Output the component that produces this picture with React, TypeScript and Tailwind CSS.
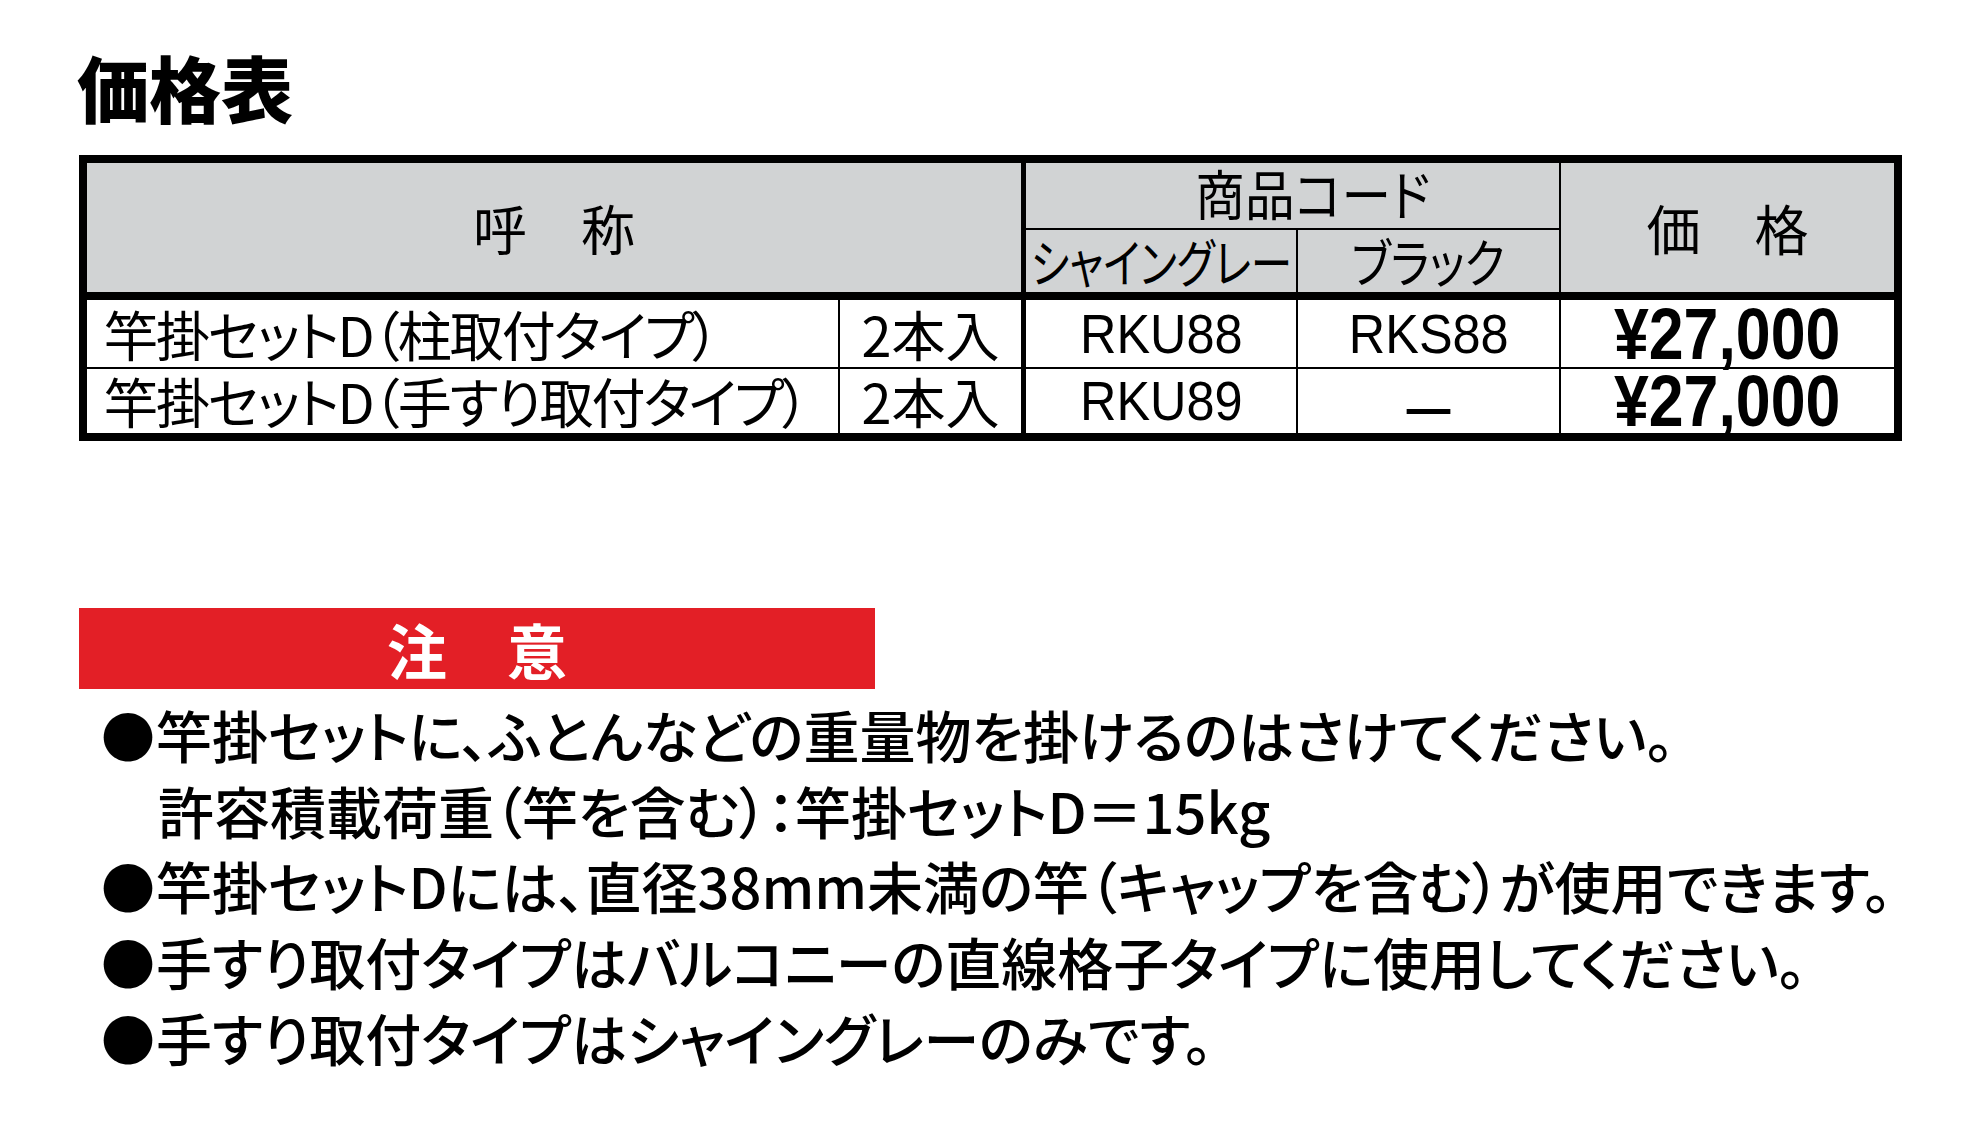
export default function App() {
  return (
    <div className="w-[1972px] h-[1144px] overflow-hidden bg-white text-black font-['Noto_Sans_CJK_JP','Noto_Sans_CJK_SC',sans-serif] [font-feature-settings:'palt'] pl-[79px] pt-[50px]">
      <h1 className="text-[72px] leading-[72px] font-black -ml-[2px]">価格表</h1>

      <div className="mt-[33px] w-[1823px] border-[8px] border-black">
        {/* header */}
        <div className="flex h-[137px] border-b-[8px] border-black bg-[#d1d3d4]">
          <div className="w-[939px] border-r-[5px] border-black flex items-center justify-center text-[54px] leading-none">
            呼　称
          </div>
          <div className="w-[535px] border-r-2 border-black flex flex-col">
            <div className="h-[67px] border-b-2 border-black flex items-center justify-center pl-[40px] pb-[5px] text-[54px] leading-none">
              <span className="inline-block whitespace-nowrap scale-x-[0.92]">商品コード</span>
            </div>
            <div className="flex-1 flex">
              <div className="w-[272px] border-r-2 border-black flex items-center justify-center text-[52px] leading-none">
                <span className="inline-block whitespace-nowrap scale-x-[0.8]">シャイングレー</span>
              </div>
              <div className="flex-1 flex items-center justify-center text-[52px] leading-none">
                <span className="inline-block whitespace-nowrap scale-x-[0.86]">ブラック</span>
              </div>
            </div>
          </div>
          <div className="flex-1 flex items-center justify-center text-[54px] leading-none">
            価　格
          </div>
        </div>

        {/* row 1 */}
        <div className="flex h-[69px] border-b-2 border-black">
          <div className="w-[753px] border-r-2 border-black flex items-center pl-[17px] text-[54px] leading-none tracking-[-2px] whitespace-nowrap">
            竿掛セットD（柱取付タイプ）
          </div>
          <div className="w-[186px] border-r-[5px] border-black flex items-center justify-center text-[54px] leading-none">
            2本入
          </div>
          <div className="w-[272px] border-r-2 border-black flex items-center justify-center">
            <span className="inline-block font-['Liberation_Sans',sans-serif] text-[56px] leading-none scale-x-[0.9]">RKU88</span>
          </div>
          <div className="w-[263px] border-r-2 border-black flex items-center justify-center">
            <span className="inline-block font-['Liberation_Sans',sans-serif] text-[56px] leading-none scale-x-[0.9]">RKS88</span>
          </div>
          <div className="flex-1 flex items-center justify-center">
            <span className="inline-block font-['Liberation_Sans',sans-serif] font-bold text-[72px] leading-none scale-x-[0.87]">¥27,000</span>
          </div>
        </div>

        {/* row 2 */}
        <div className="flex h-[64px]">
          <div className="w-[753px] border-r-2 border-black flex items-center pl-[17px] text-[54px] leading-none tracking-[-2px] whitespace-nowrap">
            竿掛セットD（手すり取付タイプ）
          </div>
          <div className="w-[186px] border-r-[5px] border-black flex items-center justify-center text-[54px] leading-none">
            2本入
          </div>
          <div className="w-[272px] border-r-2 border-black flex items-center justify-center">
            <span className="inline-block font-['Liberation_Sans',sans-serif] text-[56px] leading-none scale-x-[0.9]">RKU89</span>
          </div>
          <div className="w-[263px] border-r-2 border-black flex items-center justify-center pt-[6px] text-[54px] leading-none font-bold">
            —
          </div>
          <div className="flex-1 flex items-center justify-center">
            <span className="inline-block font-['Liberation_Sans',sans-serif] font-bold text-[72px] leading-none scale-x-[0.87]">¥27,000</span>
          </div>
        </div>
      </div>

      {/* caution */}
      <div className="mt-[167px] w-[796px] h-[81px] bg-[#e31f26] flex items-center justify-center text-white font-bold text-[60px] leading-none">
        注　意
      </div>

      <div className="mt-[7px] pl-[22px] text-[56px] leading-[75px] font-medium whitespace-nowrap">
        <div>
          <span className="inline-block w-[55px] text-[54px]">●</span>竿掛セットに、ふとんなどの重量物を掛けるのはさけてください。
        </div>
        <div className="pl-[57px]">許容積載荷重（竿を含む）：竿掛セットD＝15kg</div>
        <div>
          <span className="inline-block w-[55px] text-[54px]">●</span>竿掛セットDには、直径38mm未満の竿（キャップを含む）が使用できます。
        </div>
        <div>
          <span className="inline-block w-[55px] text-[54px]">●</span>手すり取付タイプはバルコニーの直線格子タイプに使用してください。
        </div>
        <div>
          <span className="inline-block w-[55px] text-[54px]">●</span>手すり取付タイプはシャイングレーのみです。
        </div>
      </div>
    </div>
  );
}
